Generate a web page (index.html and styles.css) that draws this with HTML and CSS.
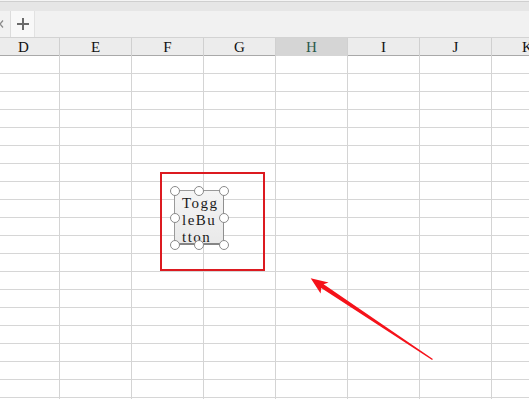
FILE: index.html
```html
<!DOCTYPE html>
<html>
<head>
<meta charset="utf-8">
<link rel="stylesheet" href="styles.css">
</head>
<body>
<div class="app">
  <div class="tabbar">
    <div class="tb-top"></div>
    <div class="tb-band"></div>
    <div class="tb-tabs">
      <div class="tab-prev">
        <svg width="10" height="26" viewBox="0 0 10 26"><path d="M3 9.5 L0 13 L3 16.5" fill="none" stroke="#8a8a8a" stroke-width="1.2"/></svg>
      </div>
      <div class="tab-add">
        <svg width="14" height="14" viewBox="0 0 14 14"><path d="M7 1 V13 M1 7 H13" stroke="#6a6a6a" stroke-width="2"/></svg>
      </div>
    </div>
  </div>
  <div class="sheet">
    <div class="colheads">
      <div class="ch">D</div><div class="ch">E</div><div class="ch">F</div><div class="ch">G</div><div class="ch sel">H</div><div class="ch">I</div><div class="ch">J</div><div class="ch">K</div>
    </div>
    <div class="grid">
      <div class="row"><i></i><i></i><i></i><i></i><i></i><i></i><i></i><i></i></div>
      <div class="row"><i></i><i></i><i></i><i></i><i></i><i></i><i></i><i></i></div>
      <div class="row"><i></i><i></i><i></i><i></i><i></i><i></i><i></i><i></i></div>
      <div class="row"><i></i><i></i><i></i><i></i><i></i><i></i><i></i><i></i></div>
      <div class="row"><i></i><i></i><i></i><i></i><i></i><i></i><i></i><i></i></div>
      <div class="row"><i></i><i></i><i></i><i></i><i></i><i></i><i></i><i></i></div>
      <div class="row"><i></i><i></i><i></i><i></i><i></i><i></i><i></i><i></i></div>
      <div class="row"><i></i><i></i><i></i><i></i><i></i><i></i><i></i><i></i></div>
      <div class="row"><i></i><i></i><i></i><i></i><i></i><i></i><i></i><i></i></div>
      <div class="row"><i></i><i></i><i></i><i></i><i></i><i></i><i></i><i></i></div>
      <div class="row"><i></i><i></i><i></i><i></i><i></i><i></i><i></i><i></i></div>
      <div class="row"><i></i><i></i><i></i><i></i><i></i><i></i><i></i><i></i></div>
      <div class="row"><i></i><i></i><i></i><i></i><i></i><i></i><i></i><i></i></div>
      <div class="row"><i></i><i></i><i></i><i></i><i></i><i></i><i></i><i></i></div>
      <div class="row"><i></i><i></i><i></i><i></i><i></i><i></i><i></i><i></i></div>
      <div class="row"><i></i><i></i><i></i><i></i><i></i><i></i><i></i><i></i></div>
      <div class="row"><i></i><i></i><i></i><i></i><i></i><i></i><i></i><i></i></div>
      <div class="row"><i></i><i></i><i></i><i></i><i></i><i></i><i></i><i></i></div>
      <div class="row"><i></i><i></i><i></i><i></i><i></i><i></i><i></i><i></i></div>
      <div class="row"><i></i><i></i><i></i><i></i><i></i><i></i><i></i><i></i></div>
    </div>
  </div>

  <div class="highlight"></div>
  <div class="ctl">
    <div class="ctl-body">Togg<br>leBu<br>tton</div>
    <span class="h h-tl"></span><span class="h h-tc"></span><span class="h h-tr"></span>
    <span class="h h-ml"></span><span class="h h-mr"></span>
    <span class="h h-bl"></span><span class="h h-bc"></span><span class="h h-br"></span>
  </div>
  <svg class="arrow" width="529" height="399" viewBox="0 0 529 399">
    <polygon points="310.7,278.3 328.6,282.4 323.6,284.3 432.9,358.9 432.1,360.1 321.2,287.9 320.6,293.5" fill="#f5121a"/>
  </svg>
</div>
</body>
</html>
```

FILE: styles.css
```css
html, body {
  margin: 0;
  padding: 0;
  background: #ffffff;
}
.app {
  position: relative;
  width: 529px;
  height: 399px;
  overflow: hidden;
  background: #ffffff;
}
.tabbar {
  height: 37px;
  display: flex;
  flex-direction: column;
}
.tb-top {
  height: 1px;
  background: #f4f4f4;
  border-bottom: 1px solid #cfcfcf;
}
.tb-band {
  height: 9px;
  background: #e6e6e6;
}
.tb-tabs {
  height: 26px;
  background: #f1f1f1;
  display: flex;
}
.tab-prev {
  width: 10px;
  height: 26px;
  display: flex;
}
.tab-add {
  width: 25px;
  height: 26px;
  box-sizing: border-box;
  background: #f8f8f8;
  border-left: 1px solid #dcdcdc;
  border-right: 1px solid #e2e2e2;
  display: flex;
  align-items: center;
  justify-content: center;
}
.sheet {
  margin-left: -12px;
}
.colheads {
  display: grid;
  grid-template-columns: repeat(8, 72px);
  height: 19px;
  box-sizing: border-box;
  border-top: 1px solid #d3d3d3;
  border-bottom: 1px solid #a9a9a9;
  background: #ececec;
}
.ch {
  box-sizing: border-box;
  border-right: 1px solid #d0d0d0;
  font-family: "Liberation Serif", serif;
  font-size: 15px;
  line-height: 18px;
  text-align: center;
  color: #111111;
}
.ch.sel {
  background: #d5d5d5;
  color: #2a5a4c;
}
.grid {
  display: flex;
  flex-direction: column;
}
.row {
  display: grid;
  grid-template-columns: repeat(8, 72px);
  height: 18px;
}
.row i {
  display: block;
  box-sizing: border-box;
  border-right: 1px solid #d4d4d4;
  border-bottom: 1px solid #d6d6d6;
}
.highlight {
  position: absolute;
  left: 160px;
  top: 172px;
  width: 105px;
  height: 99px;
  box-sizing: border-box;
  border: 2px solid #dc1a20;
}
.ctl {
  position: absolute;
  left: 174px;
  top: 190px;
  width: 50px;
  height: 55px;
}
.ctl-body {
  width: 100%;
  height: 100%;
  box-sizing: border-box;
  border: 1px solid #9a9a9a;
  border-bottom: 2px solid #858585;
  border-right: 1px solid #8f8f8f;
  background: linear-gradient(#f5f5f5, #e9e9e9);
  overflow: hidden;
  padding: 4px 0 0 7px;
  font-family: "Liberation Serif", serif;
  font-size: 15px;
  letter-spacing: 1.5px;
  line-height: 17px;
  color: #1a1a1a;
  white-space: nowrap;
}
.h {
  position: absolute;
  width: 10px;
  height: 10px;
  box-sizing: border-box;
  border: 1.5px solid #8a8a8a;
  border-radius: 50%;
  background: #ffffff;
  transform: translate(-50%, -50%);
}
.h-tl { left: 0.5px; top: 0.5px; }
.h-tc { left: 25px; top: 0.5px; }
.h-tr { left: 49.5px; top: 0.5px; }
.h-ml { left: 0.5px; top: 27.5px; }
.h-mr { left: 49.5px; top: 27.5px; }
.h-bl { left: 0.5px; top: 54.5px; }
.h-bc { left: 25px; top: 54.5px; }
.h-br { left: 49.5px; top: 54.5px; }
.arrow {
  position: absolute;
  left: 0;
  top: 0;
}
```
